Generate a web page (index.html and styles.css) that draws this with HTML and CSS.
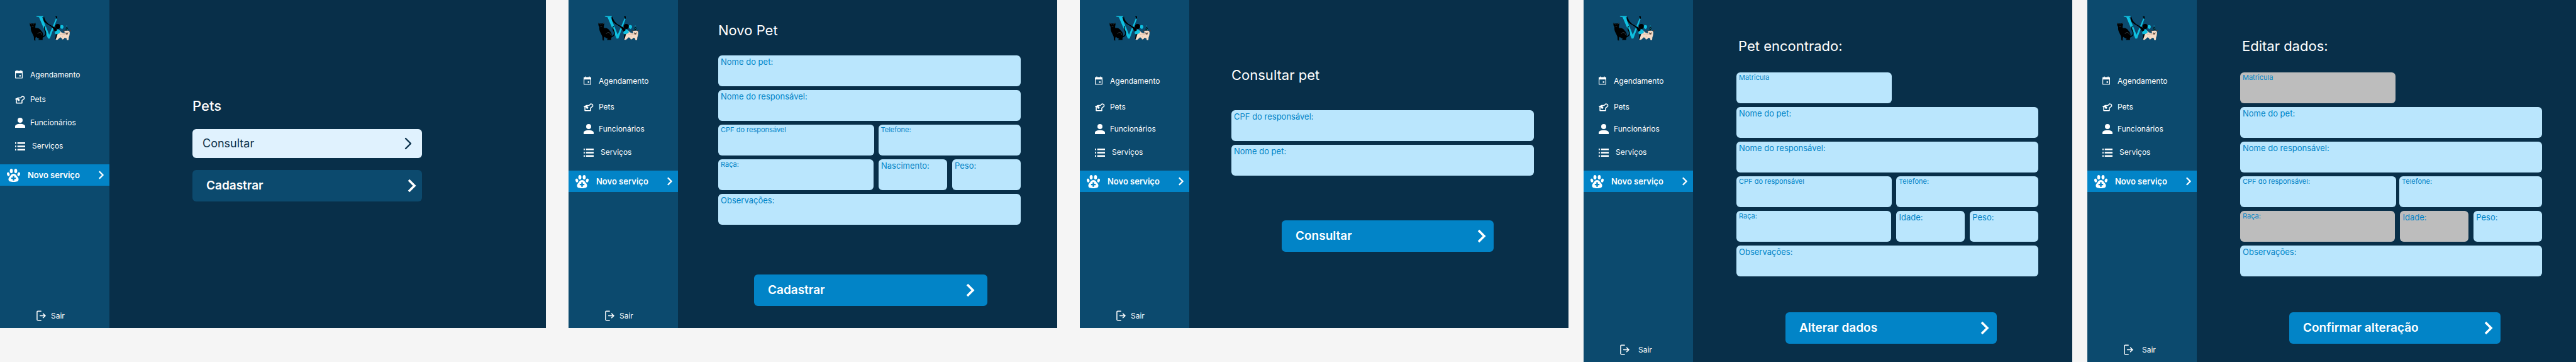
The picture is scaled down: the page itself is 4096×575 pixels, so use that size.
FILE: index.html
```html
<!DOCTYPE html>
<html lang="pt-BR">
<head>
<meta charset="utf-8">
<meta name="viewport" content="width=device-width, initial-scale=1">
<title>Pets</title>
<link rel="stylesheet" href="styles.css">
</head>
<body>
<svg class="sprite" aria-hidden="true">
  <symbol id="logo" viewBox="24 18 330 198">
    <path fill="#0fc0e0" d="M78 19H133V24L124 28L180 168L234 38L243 42L185 198H171L99 28L78 25Z"/>
    <path fill="#000" d="M229 22H244V34L240 44L236 34ZM139 22C130 42 134 58 146 70C164 88 192 98 208 114L226 143L246 134L234 116C204 92 150 86 139 22Z"/>
    <path fill="#000" d="M26 72L37 80Q48 77 58 80L70 72L73 84L70 100Q68 110 72 116C92 112 108 122 116 136C128 146 134 160 132 178C150 172 154 158 146 142C136 124 134 104 150 96Q156 96 150 101C140 110 146 124 153 138C164 166 152 180 132 188C124 198 130 204 128 210H94Q92 204 104 202L86 192C80 188 76 184 74 184L68 206L76 210Q70 215 60 212L58 184C50 160 30 140 34 106Q26 98 26 86Z"/>
    <path fill="none" stroke="#6c7f8a" stroke-width="2" d="M40 86L42 92M56 86L54 92M42 101Q49 106 56 101M88 162C98 142 122 148 122 168M28 74L32 82M68 74L66 82"/>
    <path fill="#000" d="M230 156Q236 178 227 206L238 194L244 160Z"/>
    <circle fill="#0fc0e0" cx="280" cy="105" r="14"/>
    <path fill="#0fc0e0" d="M276 116L288 116L284 124Z"/>
    <circle fill="#000" cx="248" cy="102" r="20"/>
    <path fill="#f6dcc7" d="M258 132Q272 138 278 150L304 156L300 140Q322 128 340 140Q346 152 342 166Q340 182 336 188L334 208Q328 216 320 208L318 196L302 192L296 202L284 206Q282 192 268 188L250 204Q242 212 232 206L242 180Q240 168 252 158Z"/>
    <path fill="#0fc0e0" d="M225 150C226 138 234 138 240 136C242 122 254 120 260 132Q272 138 266 154L248 162L230 164Q224 158 225 150Z"/>
    <path fill="none" stroke="#b28c79" stroke-width="2" d="M268 140C278 158 292 160 308 162M262 162Q280 172 306 166M284 188L288 178"/>
    <path fill="#4c3a33" d="M288 142Q292 130 304 132L298 142ZM338 132Q350 128 352 138L346 142ZM309 160Q320 148 331 160Q326 169 320 164Q314 169 309 160Z"/>
    <path fill="#3c2c28" d="M310 148H316V151H310ZM326 148H332V151H326Z"/>
    <path fill="#06131a" d="M320 98L308 132Q320 138 333 130Z"/>
    <path fill="#0fc0e0" d="M316 96H324V102H316ZM318 114H323V119H318ZM324 124H329V129H324ZM312 126H317V131H312Z"/>
  </symbol>
  <symbol id="calendar" viewBox="0 0 20 22">
    <path fill="currentColor" fill-rule="evenodd" d="M4 0H6V2H14V0H16V2H18Q20 2 20 4V20Q20 22 18 22H2Q0 22 0 20V4Q0 2 2 2H4ZM2 8V20H18V8ZM11 13H15V17H11Z"/>
  </symbol>
  <symbol id="dog" viewBox="0 0 26 22">
    <path fill="none" stroke="currentColor" stroke-width="2.6" stroke-linejoin="round" d="M3 9V20H18V13L24 8C25 3 22 2 19 1.6L14 6H7L2 9"/>
    <path fill="currentColor" d="M0 8L8 5Q9 9 12 10Q12 15 9 15Q6 15 6 11L0 10Z"/>
  </symbol>
  <symbol id="person" viewBox="0 0 28 28">
    <circle fill="currentColor" cx="14" cy="7" r="7"/>
    <path fill="currentColor" d="M0 28V24C0 19 7 17 14 17S28 19 28 24V28Z"/>
  </symbol>
  <symbol id="list" viewBox="0 0 26 21">
    <path fill="currentColor" d="M0 0H3V4H0ZM6 0H26V4H6ZM0 8.500H3V12.500H0ZM6 8.500H26V12.500H6ZM0 17H3V21H0ZM6 17H26V21H6Z"/>
  </symbol>
  <symbol id="paw" viewBox="0 0 34 34">
    <g fill="currentColor">
      <ellipse cx="11.400" cy="5.800" rx="3.900" ry="5.800"/>
      <ellipse cx="22.600" cy="5.800" rx="3.900" ry="5.800"/>
      <ellipse cx="3.600" cy="14" rx="3.400" ry="5" transform="rotate(-15 3.600 14)"/>
      <ellipse cx="30.400" cy="14" rx="3.400" ry="5" transform="rotate(15 30.400 14)"/>
      <path fill-rule="evenodd" d="M17 13C23 13 25 19 28 22C32 27 30 33 24 33Q17 35 10 33C4 33 2 27 6 22C9 19 11 13 17 13ZM15 18.500V22.500H11V26.500H15V30.500H19V26.500H23V22.500H19V18.500Z"/>
    </g>
  </symbol>
  <symbol id="chevron" viewBox="0 0 14 22">
    <path fill="none" stroke="currentColor" stroke-width="3.600" d="M2 2L11 11L2 20"/>
  </symbol>
  <symbol id="chevron-thin" viewBox="0 0 12 20">
    <path fill="none" stroke="currentColor" stroke-width="2.400" stroke-linecap="round" stroke-linejoin="round" d="M2 2L10 10L2 18"/>
  </symbol>
  <symbol id="exit" viewBox="0 0 24 26">
    <path fill="none" stroke="currentColor" stroke-width="2.400" stroke-linecap="round" stroke-linejoin="round" d="M11.500 1.500H3.500Q1.500 1.500 1.500 3.500V22.500Q1.500 24.500 3.500 24.500H11.500M9 13H22M17 8L22.500 13L17 18"/>
  </symbol>
</svg>

<section class="screen screen-home">
  <aside class="sidebar">
    <svg class="logo" role="img" aria-label="Logo"><use href="#logo"/></svg>
    <nav class="nav">
      <a class="nav-link" href="#"><svg class="icon-calendar"><use href="#calendar"/></svg><span>Agendamento</span></a>
      <a class="nav-link" href="#"><svg class="icon-dog"><use href="#dog"/></svg><span>Pets</span></a>
      <a class="nav-link" href="#"><svg class="icon-person"><use href="#person"/></svg><span>Funcionários</span></a>
      <a class="nav-link nav-link-wide" href="#"><svg class="icon-list"><use href="#list"/></svg><span>Serviços</span></a>
      <a class="nav-active" href="#"><svg class="icon-paw"><use href="#paw"/></svg><span>Novo serviço</span><svg class="icon-next"><use href="#chevron"/></svg></a>
    </nav>
    <a class="exit" href="#"><svg class="icon-exit"><use href="#exit"/></svg><span>Sair</span></a>
  </aside>
  <main class="content">
    <h1 class="title title-strong">Pets</h1>
    <button class="button button-light" type="button"><span>Consultar</span><svg class="icon-thin"><use href="#chevron-thin"/></svg></button>
    <button class="button button-dark" type="button"><span>Cadastrar</span><svg class="icon-chevron"><use href="#chevron"/></svg></button>
  </main>
</section>

<section class="screen screen-new">
  <aside class="sidebar">
    <svg class="logo" role="img" aria-label="Logo"><use href="#logo"/></svg>
    <nav class="nav">
      <a class="nav-link" href="#"><svg class="icon-calendar"><use href="#calendar"/></svg><span>Agendamento</span></a>
      <a class="nav-link" href="#"><svg class="icon-dog"><use href="#dog"/></svg><span>Pets</span></a>
      <a class="nav-link" href="#"><svg class="icon-person"><use href="#person"/></svg><span>Funcionários</span></a>
      <a class="nav-link nav-link-wide" href="#"><svg class="icon-list"><use href="#list"/></svg><span>Serviços</span></a>
      <a class="nav-active" href="#"><svg class="icon-paw"><use href="#paw"/></svg><span>Novo serviço</span><svg class="icon-next"><use href="#chevron"/></svg></a>
    </nav>
    <a class="exit" href="#"><svg class="icon-exit"><use href="#exit"/></svg><span>Sair</span></a>
  </aside>
  <main class="content">
    <h1 class="title">Novo Pet</h1>
    <form class="form">
      <label class="field"><span>Nome do pet:</span><input type="text"></label>
      <label class="field"><span>Nome do responsável:</span><input type="text"></label>
      <div class="row">
        <label class="field field-small"><span>CPF do responsável</span><input type="text"></label>
        <label class="field field-small"><span>Telefone:</span><input type="tel"></label>
      </div>
      <div class="row row-three">
        <label class="field field-small"><span>Raça:</span><input type="text"></label>
        <label class="field"><span>Nascimento:</span><input type="text"></label>
        <label class="field"><span>Peso:</span><input type="text"></label>
      </div>
      <label class="field"><span>Observações:</span><input type="text"></label>
      <button class="button button-wide" type="button"><span>Cadastrar</span><svg class="icon-chevron"><use href="#chevron"/></svg></button>
    </form>
  </main>
</section>

<section class="screen screen-search">
  <aside class="sidebar">
    <svg class="logo" role="img" aria-label="Logo"><use href="#logo"/></svg>
    <nav class="nav">
      <a class="nav-link" href="#"><svg class="icon-calendar"><use href="#calendar"/></svg><span>Agendamento</span></a>
      <a class="nav-link" href="#"><svg class="icon-dog"><use href="#dog"/></svg><span>Pets</span></a>
      <a class="nav-link" href="#"><svg class="icon-person"><use href="#person"/></svg><span>Funcionários</span></a>
      <a class="nav-link nav-link-wide" href="#"><svg class="icon-list"><use href="#list"/></svg><span>Serviços</span></a>
      <a class="nav-active" href="#"><svg class="icon-paw"><use href="#paw"/></svg><span>Novo serviço</span><svg class="icon-next"><use href="#chevron"/></svg></a>
    </nav>
    <a class="exit" href="#"><svg class="icon-exit"><use href="#exit"/></svg><span>Sair</span></a>
  </aside>
  <main class="content">
    <h1 class="title">Consultar pet</h1>
    <form class="form">
      <label class="field"><span>CPF do responsável:</span><input type="text"></label>
      <label class="field"><span>Nome do pet:</span><input type="text"></label>
      <button class="button" type="button"><span>Consultar</span><svg class="icon-chevron"><use href="#chevron"/></svg></button>
    </form>
  </main>
</section>

<section class="screen screen-record">
  <aside class="sidebar">
    <svg class="logo" role="img" aria-label="Logo"><use href="#logo"/></svg>
    <nav class="nav">
      <a class="nav-link" href="#"><svg class="icon-calendar"><use href="#calendar"/></svg><span>Agendamento</span></a>
      <a class="nav-link" href="#"><svg class="icon-dog"><use href="#dog"/></svg><span>Pets</span></a>
      <a class="nav-link" href="#"><svg class="icon-person"><use href="#person"/></svg><span>Funcionários</span></a>
      <a class="nav-link nav-link-wide" href="#"><svg class="icon-list"><use href="#list"/></svg><span>Serviços</span></a>
      <a class="nav-active" href="#"><svg class="icon-paw"><use href="#paw"/></svg><span>Novo serviço</span><svg class="icon-next"><use href="#chevron"/></svg></a>
    </nav>
    <a class="exit" href="#"><svg class="icon-exit"><use href="#exit"/></svg><span>Sair</span></a>
  </aside>
  <main class="content">
    <h1 class="title">Pet encontrado:</h1>
    <form class="form">
      <div class="row">
        <label class="field field-small"><span>Matricula</span><input type="text"></label>
      </div>
      <label class="field"><span>Nome do pet:</span><input type="text"></label>
      <label class="field"><span>Nome do responsável:</span><input type="text"></label>
      <div class="row">
        <label class="field field-small"><span>CPF do responsável</span><input type="text"></label>
        <label class="field field-small"><span>Telefone:</span><input type="tel"></label>
      </div>
      <div class="row row-three">
        <label class="field field-small"><span>Raça:</span><input type="text"></label>
        <label class="field"><span>Idade:</span><input type="text"></label>
        <label class="field"><span>Peso:</span><input type="text"></label>
      </div>
      <label class="field"><span>Observações:</span><input type="text"></label>
      <button class="button" type="button"><span>Alterar dados</span><svg class="icon-chevron"><use href="#chevron"/></svg></button>
    </form>
  </main>
</section>

<section class="screen screen-record">
  <aside class="sidebar">
    <svg class="logo" role="img" aria-label="Logo"><use href="#logo"/></svg>
    <nav class="nav">
      <a class="nav-link" href="#"><svg class="icon-calendar"><use href="#calendar"/></svg><span>Agendamento</span></a>
      <a class="nav-link" href="#"><svg class="icon-dog"><use href="#dog"/></svg><span>Pets</span></a>
      <a class="nav-link" href="#"><svg class="icon-person"><use href="#person"/></svg><span>Funcionários</span></a>
      <a class="nav-link nav-link-wide" href="#"><svg class="icon-list"><use href="#list"/></svg><span>Serviços</span></a>
      <a class="nav-active" href="#"><svg class="icon-paw"><use href="#paw"/></svg><span>Novo serviço</span><svg class="icon-next"><use href="#chevron"/></svg></a>
    </nav>
    <a class="exit" href="#"><svg class="icon-exit"><use href="#exit"/></svg><span>Sair</span></a>
  </aside>
  <main class="content">
    <h1 class="title">Editar dados:</h1>
    <form class="form">
      <div class="row">
        <label class="field field-small field-locked"><span>Matricula</span><input type="text" disabled></label>
      </div>
      <label class="field"><span>Nome do pet:</span><input type="text"></label>
      <label class="field"><span>Nome do responsável:</span><input type="text"></label>
      <div class="row row-tight">
        <label class="field field-small"><span>CPF do responsável:</span><input type="text"></label>
        <label class="field field-small"><span>Telefone:</span><input type="tel"></label>
      </div>
      <div class="row row-three">
        <label class="field field-small field-locked"><span>Raça:</span><input type="text" disabled></label>
        <label class="field field-locked"><span>Idade:</span><input type="text" disabled></label>
        <label class="field"><span>Peso:</span><input type="text"></label>
      </div>
      <label class="field"><span>Observações:</span><input type="text"></label>
      <button class="button" type="button"><span>Confirmar alteração</span><svg class="icon-chevron"><use href="#chevron"/></svg></button>
    </form>
  </main>
</section>
</body>
</html>
```
FILE: styles.css
```css
:root {
  --navy: #082f49;
  --side: #0c4a6e;
  --blue: #0284c7;
  --sky: #bae6fd;
  --pale: #e0f2fe;
  --locked: #bdbdbd;
}

* {
  box-sizing: border-box;
}

body {
  display: flex;
  align-items: flex-start;
  min-height: 100vh;
  margin: 0;
  background: #f5f5f5;
  color: #fff;
  font-family: Inter, "Liberation Sans", sans-serif;
}

a {
  color: inherit;
  text-decoration: none;
}

svg {
  display: block;
  flex: none;
}

.sprite {
  position: absolute;
  width: 0;
  height: 0;
}

/* Screens */

.screen {
  --rows: 41px 35px 37px 39px 34px;
  --nav-top: 54px;
  display: flex;
  flex: 777 1 0;
  background: var(--navy);
}

.screen-home {
  --rows: 39px 37px 37px 39px 34px;
  --nav-top: 44px;
  flex-grow: 868;
}

.screen-new,
.screen-search {
  margin-left: 36px;
}

.screen-record {
  align-self: stretch;
  margin-left: 24px;
}

/* Sidebar */

.sidebar {
  display: flex;
  flex: none;
  flex-direction: column;
  width: 174px;
  padding: 25px 0 11px;
  background: var(--side);
}

.logo {
  width: 66px;
  height: 40px;
  margin-left: 47px;
}

.nav {
  display: grid;
  grid-template-rows: var(--rows);
  align-items: start;
  margin-top: var(--nav-top);
}

.nav-link {
  display: grid;
  grid-template-columns: 16px 1fr;
  column-gap: 8px;
  align-items: center;
  height: 20px;
  padding-left: 24px;
  font-size: 12px;
  line-height: 20px;
}

.nav-link-wide {
  column-gap: 11px;
}

.icon-calendar {
  width: 12px;
  height: 14px;
  margin-bottom: 3px;
}

.icon-dog {
  width: 16px;
  height: 13px;
}

.icon-person {
  width: 16px;
  height: 16px;
}

.icon-list {
  width: 16px;
  height: 13px;
}

.nav-active {
  display: flex;
  align-items: center;
  height: 34px;
  padding: 0 8px 0 11px;
  background: var(--blue);
  font-size: 13px;
  font-weight: 600;
}

.icon-paw {
  width: 21px;
  height: 21px;
  margin-right: 12px;
}

.icon-next {
  width: 10px;
  height: 14px;
  margin-left: auto;
}

.exit {
  display: flex;
  align-items: center;
  gap: 8px;
  height: 18px;
  margin-top: auto;
  padding-left: 58px;
  font-size: 12px;
}

.screen-home .exit {
  margin-top: 197px;
}

.screen-record .exit {
  gap: 14px;
}

.icon-exit {
  width: 15px;
  height: 17px;
}

.screen-home,
.screen-new,
.screen-search {
  min-height: 521px;
}

/* Content */

.content {
  flex: 1;
  min-width: 0;
}

.screen-home .content {
  display: flex;
  flex-direction: column;
  padding: 154px 197px 0 132px;
}

.screen-new .content {
  padding: 34px 58px 34px 64px;
}

.screen-search .content {
  padding: 105px 55px 34px 67px;
}

.screen-record .content {
  padding: 59px 54px 28px 69px;
}

.title {
  margin: 0;
  font-size: 22px;
  font-weight: 400;
  line-height: 28px;
}

.title-strong {
  font-weight: 500;
}

.screen-record .title {
  padding-left: 3px;
}

.form {
  display: flex;
  flex-direction: column;
  gap: 6px;
  margin-top: 26px;
}

.screen-search .form {
  margin-top: 42px;
}

.screen-record .form {
  margin-top: 28px;
}

.row {
  display: grid;
  grid-template-columns: 247fr 226fr;
  gap: 7px;
}

.row-tight {
  gap: 5px;
}

.row-three {
  grid-template-columns: 247fr 109fr 109fr;
  column-gap: 8px;
}

.field {
  display: flex;
  flex-direction: column;
  height: 49px;
  padding: 0 4px;
  border-radius: 6px;
  background: var(--sky);
  color: var(--blue);
  font-size: 13px;
  line-height: 20px;
}

.field-small {
  font-size: 11px;
  line-height: 17px;
}

.field-locked {
  background: var(--locked);
}

.field input {
  flex: 1;
  width: 100%;
  min-height: 0;
  padding: 0;
  border: 0;
  outline: 0;
  background: transparent;
  color: var(--navy);
  font: inherit;
}

/* Buttons */

.button {
  display: flex;
  align-items: center;
  justify-content: space-between;
  height: 50px;
  padding: 0 12px 0 22px;
  border: 0;
  border-radius: 6px;
  background: var(--blue);
  color: #fff;
  font: 600 19px/24px Inter, "Liberation Sans", sans-serif;
  cursor: pointer;
}

.button-light {
  height: 46px;
  margin-top: 23px;
  padding: 0 16px;
  background: var(--pale);
  color: var(--navy);
  font-size: 18px;
  font-weight: 400;
}

.button-dark {
  margin-top: 19px;
  padding: 0 9px 0 22px;
  background: var(--side);
}

.form .button {
  margin: 65px 64px 0 80px;
}

.form .button-wide {
  margin: 73px 53px 0 57px;
  padding-right: 20px;
}

.screen-record .form .button {
  margin: 51px 66px 0 78px;
}

.icon-chevron {
  width: 14px;
  height: 22px;
}

.icon-thin {
  width: 12px;
  height: 20px;
}
```
